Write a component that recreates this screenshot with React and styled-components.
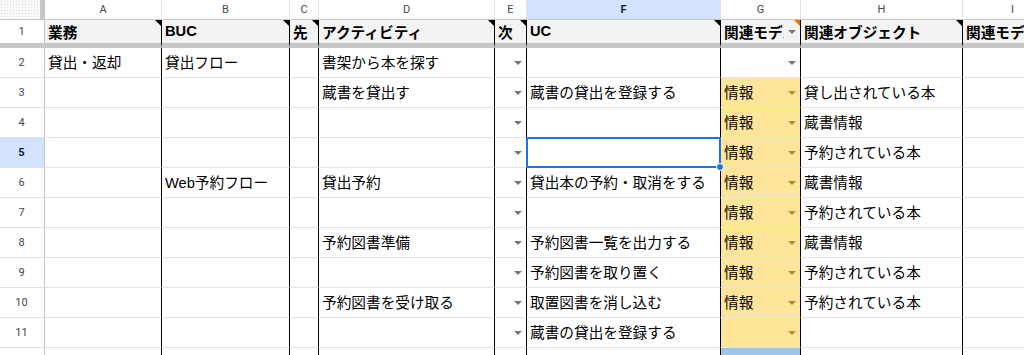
import React from "react";
import styled, { createGlobalStyle } from "styled-components";

const GlobalStyle = createGlobalStyle`
  html, body {
    margin: 0;
    padding: 0;
    background: #fff;
    overflow: hidden;
  }
  * {
    box-sizing: border-box;
  }
`;

const Viewport = styled.div`
  width: 1024px;
  height: 355px;
  overflow: hidden;
  background: #fff;
`;

const Grid = styled.div`
  display: grid;
  grid-template-columns: 45px 117px 128px 29px 176px 32px 194px 80px 162px 100px;
  grid-template-rows: 20px 28px repeat(11, 30px);
  width: max-content;
  font-family: "Liberation Sans", "Noto Sans CJK JP", sans-serif;
`;

const Corner = styled.div`
  border-right: 5px solid #c7c7c7;
  border-bottom: 1px solid #c4c7c5;
  background-color: #f8f9fa;
  background-image: radial-gradient(#dcdcdc 0.7px, transparent 0.7px);
  background-size: 3px 3px;
`;

const ColHead = styled.div`
  display: flex;
  align-items: center;
  justify-content: center;
  border-right: 1px solid #e1e1e1;
  border-bottom: 1px solid #c4c7c5;
  background: ${({ $active }) => ($active ? "#d3e3fd" : "#fff")};
  color: ${({ $active }) => ($active ? "#041e49" : "#444746")};
  font-family: Roboto, "Liberation Sans", sans-serif;
  font-size: 11px;
  font-weight: ${({ $active }) => ($active ? 700 : 400)};
`;

const RowHead = styled.div`
  display: flex;
  align-items: center;
  justify-content: center;
  padding-right: 1px;
  border-right: 1px solid #c4c7c5;
  border-bottom: ${({ $frozen }) =>
    $frozen ? "5px solid #c7c7c7" : "1px solid #e1e1e1"};
  background: ${({ $active }) => ($active ? "#d3e3fd" : "#fff")};
  color: ${({ $active }) => ($active ? "#041e49" : "#444746")};
  font-family: Roboto, "Liberation Sans", sans-serif;
  font-size: 11px;
  font-weight: ${({ $active }) => ($active ? 700 : 400)};
`;

const Cell = styled.div`
  position: relative;
  display: flex;
  align-items: center;
  min-width: 0;
  padding: 0 0 ${({ $head }) => ($head ? "1px" : "2px")} 3px;
  border-right: 1px solid ${({ $edge }) => ($edge ? "#e2e3e3" : "#000")};
  border-bottom: ${({ $head }) =>
    $head ? "5px solid #c7c7c7" : "1px solid #e2e3e3"};
  background: ${({ $head, $bg }) => $bg || ($head ? "#f3f3f3" : "#fff")};
  color: #000;
  font-size: 11pt;
  font-weight: ${({ $head }) => ($head ? 700 : 400)};
  white-space: nowrap;
`;

const Text = styled.span`
  flex: 1;
  min-width: 0;
  overflow: hidden;
`;

const ArrowBox = styled.span`
  display: flex;
  align-items: center;
  justify-content: center;
  width: 16px;
  flex: none;
  align-self: stretch;
  padding-top: ${({ $head }) => ($head ? "1px" : "2px")};
`;

const Arrow = styled.span`
  width: 0;
  height: 0;
  border-left: 4px solid transparent;
  border-right: 4px solid transparent;
  border-top: 4px solid ${({ $color }) => $color};
`;

const Note = styled.span`
  position: absolute;
  top: 0;
  right: 0;
  width: 0;
  height: 0;
  border-top: 6px solid ${({ $color }) => $color};
  border-left: 6px solid transparent;
`;

const Selection = styled.span`
  position: absolute;
  top: -1px;
  left: -1px;
  right: -1px;
  bottom: -1px;
  border: 2px solid #1a73e8;
  z-index: 2;
  pointer-events: none;
`;

const Handle = styled.span`
  position: absolute;
  right: -5px;
  bottom: -5px;
  width: 8px;
  height: 8px;
  border-radius: 50%;
  background: #1a73e8;
  border: 1px solid #fff;
`;

const letters = ["A", "B", "C", "D", "E", "F", "G", "H", "I"];

const YELLOW = "#ffe599";
const GOLD = "#b08d2c";
const GRAY = "#757575";

const header = [
  { t: "業務", note: "#000" },
  { t: "BUC", note: "#000" },
  { t: "先", note: "#000" },
  { t: "アクティビティ", note: "#000" },
  { t: "次", note: "#000" },
  { t: "UC", note: "#000" },
  { t: "関連モデル", note: "#e37400", dd: GRAY },
  { t: "関連オブジェクト", note: "#000" },
  { t: "関連モデル" },
];

const dd = { dd: GRAY };
const info = (t) => ({ t, bg: YELLOW, dd: GOLD });

const rows = [
  ["貸出・返却", "貸出フロー", "", "書架から本を探す", dd, "", { dd: GRAY }, "", ""],
  ["", "", "", "蔵書を貸出す", dd, "蔵書の貸出を登録する", info("情報"), "貸し出されている本", ""],
  ["", "", "", "", dd, "", info("情報"), "蔵書情報", ""],
  ["", "", "", "", dd, { t: "", selected: true }, info("情報"), "予約されている本", ""],
  ["", "Web予約フロー", "", "貸出予約", dd, "貸出本の予約・取消をする", info("情報"), "蔵書情報", ""],
  ["", "", "", "", dd, "", info("情報"), "予約されている本", ""],
  ["", "", "", "予約図書準備", dd, "予約図書一覧を出力する", info("情報"), "蔵書情報", ""],
  ["", "", "", "", dd, "予約図書を取り置く", info("情報"), "予約されている本", ""],
  ["", "", "", "予約図書を受け取る", dd, "取置図書を消し込む", info("情報"), "予約されている本", ""],
  ["", "", "", "", dd, "蔵書の貸出を登録する", info(""), "", ""],
  ["", "", "", "", "", "", { bg: "#9fc5e8" }, "", ""],
];

function SheetCell({ value, head, edge }) {
  const v = typeof value === "string" ? { t: value } : value;
  return (
    <Cell $head={head} $edge={edge} $bg={v.bg}>
      <Text>{v.t}</Text>
      {v.dd && (
        <ArrowBox $head={head}>
          <Arrow $color={v.dd} />
        </ArrowBox>
      )}
      {v.note && <Note $color={v.note} />}
      {v.selected && (
        <Selection>
          <Handle />
        </Selection>
      )}
    </Cell>
  );
}

export default function App() {
  return (
    <Viewport>
      <GlobalStyle />
      <Grid>
        <Corner />
        {letters.map((l) => (
          <ColHead key={l} $active={l === "F"}>
            {l}
          </ColHead>
        ))}

        <RowHead $frozen>1</RowHead>
        {header.map((c, i) => (
          <SheetCell key={i} value={c} head edge={i === 8} />
        ))}

        {rows.map((row, r) => (
          <React.Fragment key={r}>
            <RowHead $active={r + 2 === 5}>{r + 2}</RowHead>
            {row.map((c, i) => (
              <SheetCell key={i} value={c} edge={i === 8} />
            ))}
          </React.Fragment>
        ))}
      </Grid>
    </Viewport>
  );
}
